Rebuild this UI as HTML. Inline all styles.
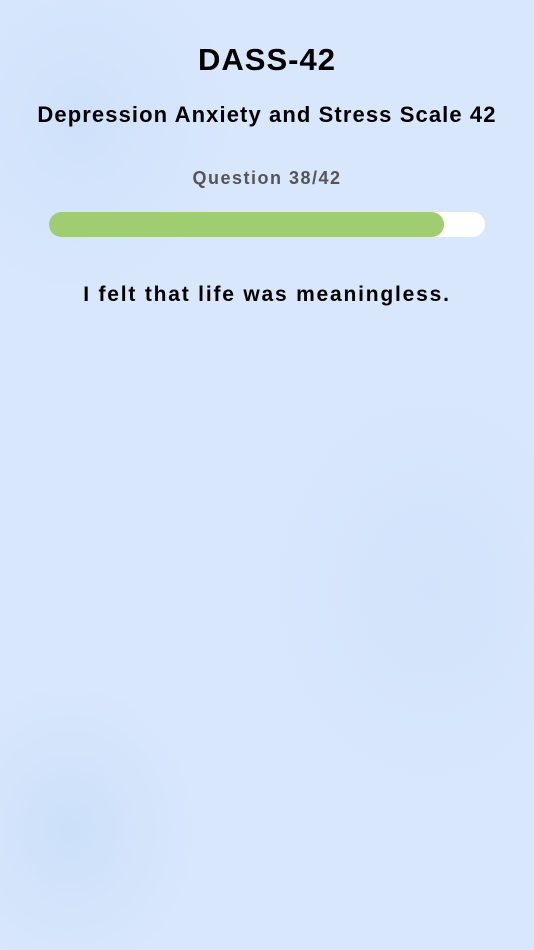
<!DOCTYPE html>
<html><head><style>
html,body{margin:0;padding:0;width:534px;height:950px;overflow:hidden}
body{position:relative;background:#d9e7fc;font-family:"Liberation Sans",sans-serif;}
.blob{position:absolute;border-radius:50%;}
.t{position:absolute;left:0;width:534px;text-align:center;font-weight:bold;color:#000;white-space:nowrap;}
</style></head><body>
<div class="blob" style="left:-80px;top:-60px;width:320px;height:360px;background:radial-gradient(closest-side,#cfe2fb,rgba(217,231,252,0));"></div>
<div class="blob" style="left:-60px;top:680px;width:260px;height:300px;background:radial-gradient(closest-side,#cce0fa,rgba(217,231,252,0));"></div>
<div class="blob" style="left:260px;top:380px;width:340px;height:420px;background:radial-gradient(closest-side,#d2e3fb,rgba(217,231,252,0));"></div>
<div class="t" style="top:42px;font-size:31px;letter-spacing:1px;">DASS-42</div>
<div class="t" style="top:102px;font-size:22px;letter-spacing:1.1px;">Depression Anxiety and Stress Scale 42</div>
<div class="t" style="top:168px;font-size:18px;color:#555;letter-spacing:1.5px;">Question 38/42</div>
<div style="position:absolute;left:49px;top:212px;width:436px;height:25px;border-radius:13px;background:#fff;"></div>
<div style="position:absolute;left:49px;top:212px;width:395px;height:25px;border-radius:13px;background:#a0cc72;"></div>
<div class="t" style="top:283px;font-size:21px;letter-spacing:1.8px;">I felt that life was meaningless.</div>
</body></html>
